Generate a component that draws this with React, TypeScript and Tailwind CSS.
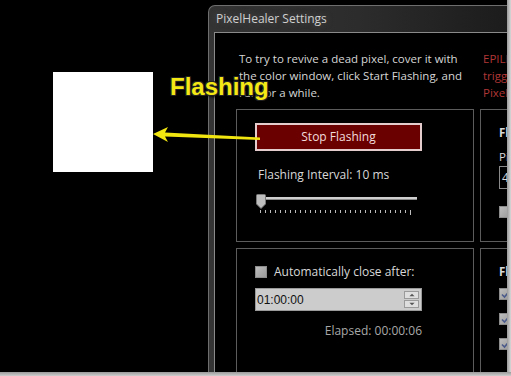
import React from 'react';

const ticks = Array.from({ length: 31 }, (_, i) => i);

const GroupBox: React.FC<{ className?: string; children?: React.ReactNode }> = ({ className = '', children }) => (
  <div className={`border border-[#5c5c5c] ${className}`}>{children}</div>
);

const CheckBox: React.FC<{ checked?: boolean }> = ({ checked }) => (
  <div className="w-[12px] h-[12px] shrink-0 border border-[#8c8c8c] bg-gradient-to-br from-[#bdbdbd] to-[#9a9a9a] flex items-center justify-center">
    {checked && (
      <svg width="9" height="9" viewBox="0 0 9 9">
        <path d="M1 4.5 L3.5 7 L8 1.5" stroke="#4a5a8a" strokeWidth="1.6" fill="none" />
      </svg>
    )}
  </div>
);

export default function App() {
  return (
    <div className="relative w-[511px] h-[376px] overflow-hidden bg-black font-['Open_Sans',sans-serif] text-[11.5px] flex flex-col">
      <div className="flex h-[372px]">
        {/* desktop area with the colour window */}
        <div className="w-[208px] shrink-0 pt-[72px] pl-[53px]">
          <div className="w-[100px] h-[100px] bg-white" />
        </div>

        {/* settings window */}
        <div className="flex-1 min-w-0 mt-[5px] flex flex-col rounded-tl-[7px] border-l border-t border-[#6e6e6e] bg-gradient-to-r from-[#343434] via-[#2c2c2c] to-[#1c1c1c] overflow-hidden">
          <div className="h-[26px] shrink-0 pl-[7px] flex items-center">
            <span className="text-[#cfcfcf] text-[12px] [text-shadow:0_0_6px_#555]">PixelHealer Settings</span>
          </div>
          <div className="flex-1 ml-[5px] border-l border-t border-[#8a8a8a] bg-black flex flex-col overflow-hidden">
            <div className="flex pt-[17px] leading-[17px] whitespace-nowrap">
              <div className="w-[268px] shrink-0 pl-[24px] text-[#d6d6d6]">
                To try to revive a dead pixel, cover it with<br />
                the color window, click Start Flashing, and<br />
                run for a while.
              </div>
              <div className="shrink-0 text-[#b03636]">
                EPILEPSY WARNING: may<br />
                trigger seizures.<br />
                PixelHealer
              </div>
            </div>

            <div className="flex gap-[6px] pl-[21px] mt-[8px]">
              <GroupBox className="w-[238px] h-[133px] shrink-0 pl-[18px] pt-[13px]">
                <div className="w-[167px] h-[28px] border-2 border-[#e4cccc] bg-[#6b0000] flex items-center justify-center text-[12px] text-[#f2dcdc]">
                  Stop Flashing
                </div>
                <div className="mt-[16px] pl-[3px] text-[#d8d8d8] text-[12px] leading-[16px]">Flashing Interval: 10 ms</div>
                <div className="relative mt-[11px] ml-[1px] w-[161px] h-[14px]">
                  <div className="absolute left-[2px] right-0 top-[3px] h-[3px] bg-[#cfcfcf] border-b border-[#8a8a8a]" />
                  <svg className="absolute left-0 top-0" width="10" height="15" viewBox="0 0 10 15">
                    <path d="M0.5 1.5 Q0.5 0.5 1.5 0.5 L8.5 0.5 Q9.5 0.5 9.5 1.5 L9.5 10 L5 14.5 L0.5 10 Z" fill="#bdbdbd" stroke="#7a7a7a" />
                  </svg>
                </div>
                <div className="flex justify-between w-[151px] ml-[5px] mt-[2px] items-start">
                  {ticks.map((t) => (
                    <div key={t} className={`w-px bg-[#bdbdbd] ${t === 30 ? 'h-[5px]' : 'h-[3px]'}`} />
                  ))}
                </div>
              </GroupBox>
              <GroupBox className="flex-1 h-[133px] pl-[18px] pt-[15px] text-[#d8d8d8] whitespace-nowrap">
                <div className="font-bold leading-[16px]">Flashing Colors</div>
                <div className="mt-[8px] leading-[16px]">Pixel Size</div>
                <div className="mt-[1px] w-[40px] h-[23px] border border-[#8a8a8a] flex items-center pl-[2px] text-[12px]">4</div>
                <div className="mt-[17px]"><CheckBox /></div>
              </GroupBox>
            </div>

            <div className="flex gap-[6px] pl-[21px] mt-[6px] flex-1">
              <GroupBox className="w-[238px] shrink-0 border-b-0 pl-[18px] pt-[15px]">
                <div className="flex items-center gap-[7px] text-[12px] text-[#d8d8d8] leading-[16px]">
                  <CheckBox />
                  <span>Automatically close after:</span>
                </div>
                <div className="mt-[8px] w-[167px] h-[23px] bg-[#cccccc] border border-[#9a9a9a] flex items-center justify-between pl-[1px] pr-[2px]">
                  <span className="text-[12px] text-[#111] font-['Liberation_Sans',sans-serif]">01:00:00</span>
                  <div className="flex flex-col gap-px">
                    {['M1 5 L4 2 L7 5 Z', 'M1 2 L4 5 L7 2 Z'].map((d) => (
                      <div key={d} className="w-[15px] h-[8px] border border-[#9a9a9a] bg-[#dedede] flex items-center justify-center">
                        <svg width="8" height="6" viewBox="0 0 8 7"><path d={d} fill="#555" /></svg>
                      </div>
                    ))}
                  </div>
                </div>
                <div className="mt-[12px] w-[167px] text-right text-[12px] leading-[16px] text-[#a8a8a8]">Elapsed: 00:00:06</div>
              </GroupBox>
              <GroupBox className="flex-1 border-b-0 pl-[18px] pt-[15px] text-[#d8d8d8] whitespace-nowrap">
                <div className="font-bold leading-[16px]">Flash Options</div>
                <div className="mt-[8px] flex flex-col gap-[13px]">
                  <CheckBox checked />
                  <CheckBox checked />
                  <CheckBox checked />
                </div>
              </GroupBox>
            </div>
          </div>
        </div>

        {/* screenshot edge */}
        <div className="w-[4px] shrink-0 bg-gradient-to-r from-[#9a9a9a] to-[#d8d8d8]" />
      </div>
      <div className="h-[4px] bg-gradient-to-b from-[#9a9a9a] to-[#cfcfcf]" />

      {/* annotation */}
      <div className="absolute left-[170px] top-[75px] font-['Liberation_Sans',sans-serif] font-bold text-[24px] leading-[24px] text-[#f4e815] [text-shadow:1px_1px_0_#222,-1px_-1px_0_#222,1px_-1px_0_#222,-1px_1px_0_#222,2px_2px_3px_#000]">
        Flashing
      </div>
      <svg className="absolute left-0 top-0 pointer-events-none" width="511" height="376" viewBox="0 0 511 376">
        <polygon points="153,134 168,127 165,132.5 260,137.5 260,140 165,136.5 168,142" fill="#f2e610" />
      </svg>
    </div>
  );
}
